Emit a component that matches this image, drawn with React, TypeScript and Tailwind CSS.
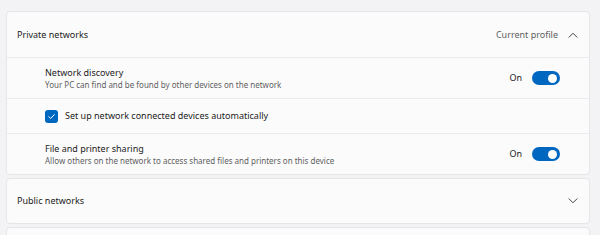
import React from "react";

function Toggle() {
  return (
    <div className="w-[28px] h-[14px] rounded-full bg-[#0067c0] flex items-center justify-end pr-[3px]">
      <div className="w-[9px] h-[9px] rounded-full bg-white" />
    </div>
  );
}

function ChevronUp() {
  return (
    <svg width="10" height="6" viewBox="0 0 10 6" fill="none">
      <path d="M1 5.2 L5 1.2 L9 5.2" stroke="#444" strokeWidth="1" strokeLinecap="round" strokeLinejoin="round" />
    </svg>
  );
}

function ChevronDown() {
  return (
    <svg width="10" height="6" viewBox="0 0 10 6" fill="none">
      <path d="M1 0.8 L5 4.8 L9 0.8" stroke="#444" strokeWidth="1" strokeLinecap="round" strokeLinejoin="round" />
    </svg>
  );
}

export default function App() {
  return (
    <div
      className="w-[600px] h-[235px] overflow-hidden bg-[#f3f2f4] pt-[11px] pl-[6px] pr-[10px] flex flex-col gap-[3px] text-[#1b1b1b]"
      style={{ fontFamily: '"Noto Sans", "Open Sans", sans-serif' }}
    >
      <div className="shrink-0 rounded-[4px] border border-[#e6e5e7] bg-[#fbfbfc] flex flex-col">
        <div className="h-[46px] flex items-center pl-[10px] pr-[11px] border-b border-[#ebeaec]">
          <span className="text-[9px] flex-1">Private networks</span>
          <span className="text-[9px] text-[#5f5f5f] mr-[10px]">Current profile</span>
          <ChevronUp />
        </div>
        <div className="h-[41px] flex items-center pl-[38px] pr-[29px] border-b border-[#ebeaec]">
          <div className="flex-1 flex flex-col">
            <span className="text-[9px] leading-[13px]">Network discovery</span>
            <span className="text-[8px] leading-[11px] text-[#5f5f5f]">Your PC can find and be found by other devices on the network</span>
          </div>
          <span className="text-[9px] mr-[10px]">On</span>
          <Toggle />
        </div>
        <div className="h-[35px] flex items-center pl-[38px] border-b border-[#ebeaec]">
          <div className="w-[13px] h-[13px] rounded-[3px] bg-[#0067c0] flex items-center justify-center mr-[7px]">
            <svg width="9" height="9" viewBox="0 0 9 9" fill="none">
              <path d="M1.8 4.7 L3.7 6.5 L7.3 2.6" stroke="white" strokeWidth="1" strokeLinecap="round" strokeLinejoin="round" />
            </svg>
          </div>
          <span className="text-[9px]">Set up network connected devices automatically</span>
        </div>
        <div className="h-[40px] flex items-center pl-[38px] pr-[29px]">
          <div className="flex-1 flex flex-col">
            <span className="text-[9px] leading-[13px]">File and printer sharing</span>
            <span className="text-[8px] leading-[11px] text-[#5f5f5f]">Allow others on the network to access shared files and printers on this device</span>
          </div>
          <span className="text-[9px] mr-[10px]">On</span>
          <Toggle />
        </div>
      </div>
      <div className="shrink-0 h-[46px] rounded-[4px] border border-[#e6e5e7] bg-[#fbfbfc] flex items-center pl-[10px] pr-[11px]">
        <span className="text-[9px] flex-1">Public networks</span>
        <ChevronDown />
      </div>
      <div className="shrink-0 h-[46px] rounded-[4px] border border-[#e6e5e7] bg-[#fbfbfc]" />
    </div>
  );
}
